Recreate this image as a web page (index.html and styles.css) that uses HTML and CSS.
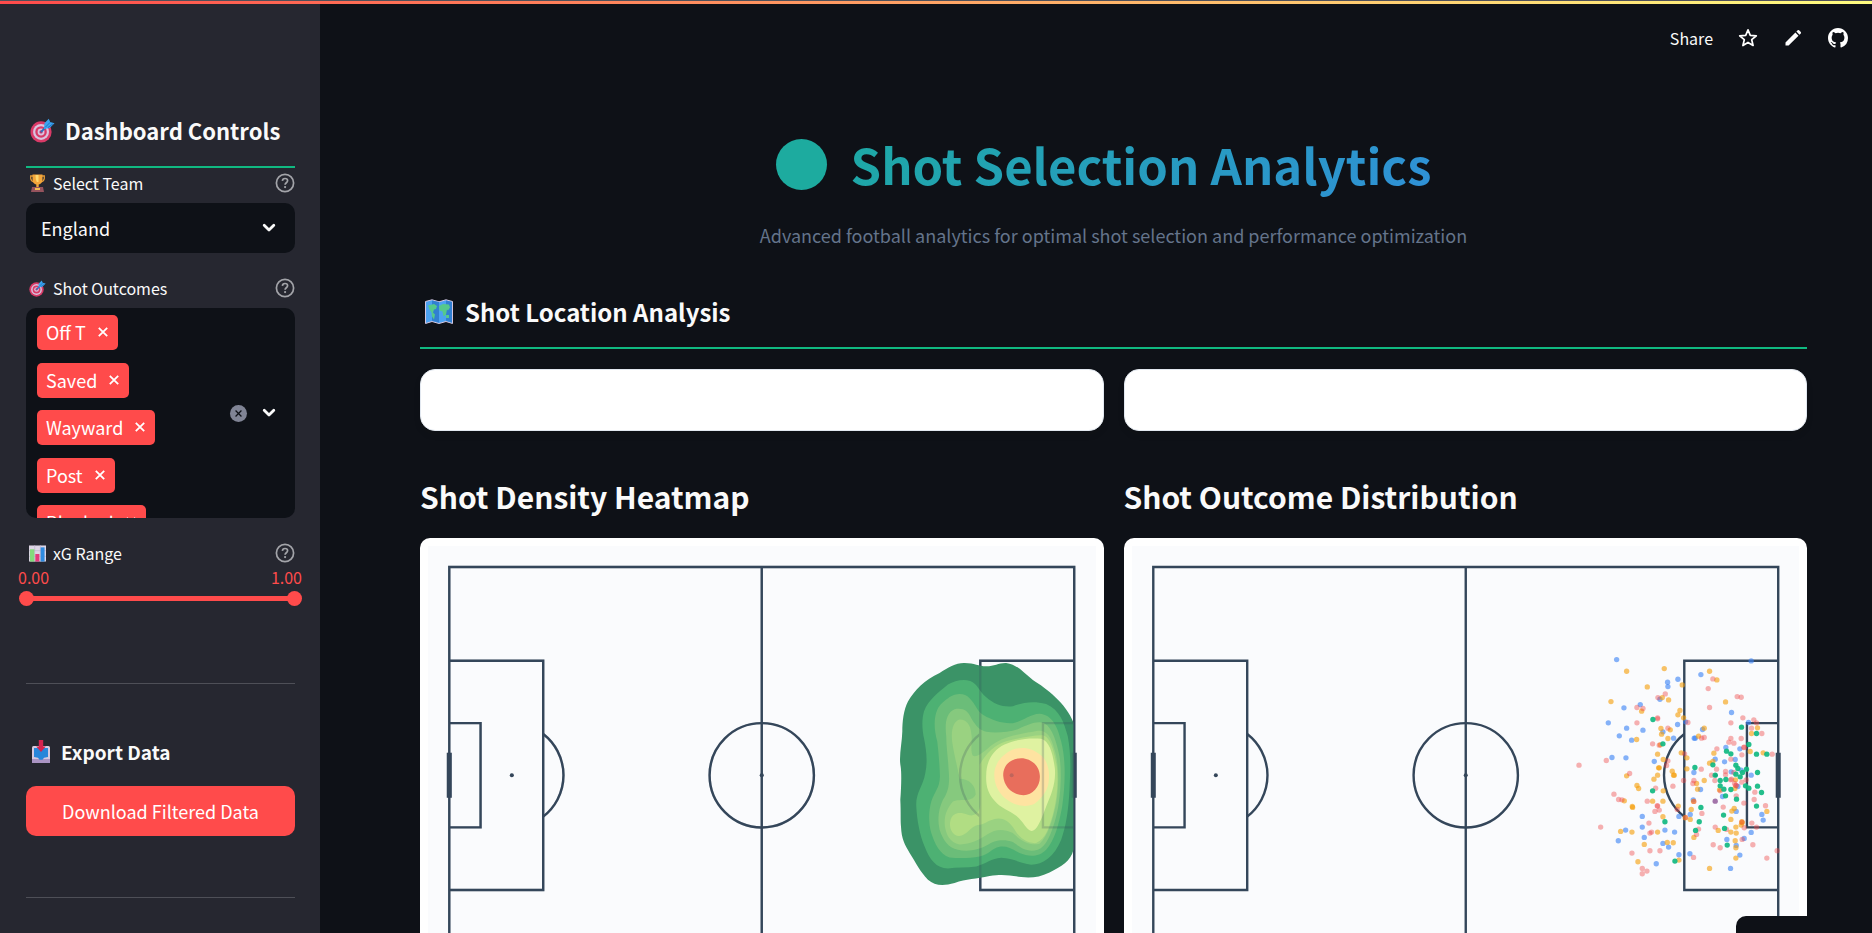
FILE: index.html
```html
<!DOCTYPE html>
<html lang="en">
<head>
<meta charset="utf-8">
<title>Shot Selection Analytics</title>
<link rel="stylesheet" href="styles.css">
</head>
<body>
<svg class="defs" aria-hidden="true">
  <defs>
    <symbol id="help" viewBox="0 0 20 20"><circle cx="10" cy="10" r="8.6" fill="none" stroke="#a3a4a9" stroke-width="1.7"/><path d="M7.4 7.9C7.5 6.4 8.6 5.5 10 5.5s2.6.9 2.6 2.3c0 1.9-2.5 2-2.5 3.9" fill="none" stroke="#a3a4a9" stroke-width="1.7"/><circle cx="10.1" cy="14.1" r="1.1" fill="#a3a4a9"/></symbol>
    <symbol id="chevron" viewBox="0 0 14 10"><path d="M2.200 2.200 7 7l4.800-4.800" fill="none" stroke="#fafafa" stroke-width="2.800" stroke-linecap="round" stroke-linejoin="round"/></symbol>
    <symbol id="cross" viewBox="0 0 10 10"><path d="M.8.8l8.400 8.400M9.200.8.8 9.200" stroke="currentColor" stroke-width="1.800"/></symbol>
    <symbol id="target" viewBox="0 0 26 26">
      <circle cx="11.500" cy="14.500" r="11" fill="#d93a67"/><circle cx="11.500" cy="14.500" r="8.300" fill="#d9c3de"/><circle cx="11.500" cy="14.500" r="6" fill="#d93a67"/><circle cx="11.500" cy="14.500" r="3.600" fill="#d9c3de"/><circle cx="11.500" cy="14.500" r="1.700" fill="#b43a70"/>
      <path d="M11.500 14.500 18 8" stroke="#2a6fbd" stroke-width="2"/><path d="M14.500 11.500 15 5.500 19.500.8l1.500 3.400 4.500 1.300-5 5z" fill="#3ba4ee"/><path d="M16 9.500 21 4.500M18.500 10 24 6" stroke="#1f6fc0" stroke-width="1"/>
    </symbol>
    <symbol id="trophy" viewBox="0 0 16 18">
      <path d="M4 2H1.200v2.500q.3 3 3.600 3.500M12 2h2.800v2.500q-.3 3-3.600 3.500" fill="none" stroke="#e39a35" stroke-width="1.300"/><path d="M3 .5h10v5.500q-.6 3.700-3.800 4.500v3H6.800v-3Q3.600 9.700 3 6z" fill="#f3a63a"/><path d="M6 1h3v7H7.300Q6 6 6 1z" fill="#ffd76c"/><path d="M2.500 13h11l1 5h-13z" fill="#95535d"/><path d="M5.500 14h5v2h-5z" fill="#f2bd55"/>
    </symbol>
    <symbol id="bars" viewBox="0 0 18 18"><path d="M0 .5h18v17H0z" fill="#ddd5e5"/><path d="M0 6h18M0 12h18M6 0v18M12 0v18" stroke="#b9aec8" stroke-width=".6"/><path d="M1 4.500h4.700v13H1z" fill="#83db7b"/><path d="M6.700 9.500h4.300v8H6.700z" fill="#e33a7b"/><path d="M12.300 2.500h4.200v15h-4.200z" fill="#2e8be0"/></symbol>
    <symbol id="inbox" viewBox="0 0 18 24"><rect y="6" width="18" height="17" rx="1.500" fill="#d5c9df"/><path d="M0 19h18v4H0z" fill="#aa94c3"/><path d="M2 8h14v9l-4 .8-1.500 2h-3L6 17.800 2 17z" fill="#2786da"/><path d="M6.800 0h4.400v6.500h2.600L9 12 4.200 6.500h2.600z" fill="#d4234f"/></symbol>
    <symbol id="map" viewBox="0 0 28 26"><path d="M.5 2.500 7 .8l7 2 7-2 6.500 1.700v22L21 22.500l-7 2-7-2-6.500 2z" fill="#4ca2f1" stroke="#d5c6df"/><path d="M7 1.500 14 3v20.500l-7-1.700zM21 1.500l6 1.500v20.500l-6-1.700z" fill="#317fd1"/><path d="M3 6.500 9 5l3 2-1 3-2 .5-1 3 2 2-1 5-2-3-.5-4-2-3zM14 7l4-2 6 .5 1 3-2 3-1-1-1 5-2.500 2-1-5-3-1zM21 16h3v3h-3z" fill="#55c98b"/></symbol>
    <g id="pitch" fill="none" stroke="#34465a" stroke-width="2.400">
      <path d="M21.300 21h625.400v417H21.300zM334 21v417M21.300 114.800h94v229.400h-94M21.300 177.300h31.300v104.300H21.300M646.700 114.800h-94v229.400h94M646.700 177.300h-31.300v104.300h31.300"/>
      <circle cx="334" cy="229.500" r="52.200"/><path d="M115.300 188.200a52.200 52.200 0 0 1 0 82.600M552.700 188.200a52.200 52.200 0 0 0 0 82.600"/>
      <path d="M21.300 207v45M646.700 207v45" stroke-width="5"/>
      <g fill="#34465a" stroke="none"><circle cx="83.900" cy="229.500" r="2"/><circle cx="334" cy="229.500" r="2"/><circle cx="584.100" cy="229.500" r="2"/></g>
    </g>
  </defs>
</svg>

<div class="topline"></div>
<div class="app">
  <aside class="sidebar">
    <h2 class="side-title"><svg class="i-target"><use href="#target"/></svg>Dashboard Controls</h2>

    <div class="field">
      <div class="label-row"><label for="team"><svg class="i-trophy"><use href="#trophy"/></svg>Select Team</label><button class="help" aria-label="Help: team"><svg><use href="#help"/></svg></button></div>
      <div class="select"><select id="team"><option>England</option></select><svg class="chevron"><use href="#chevron"/></svg></div>
    </div>

    <div class="field">
      <div class="label-row"><span id="outcomes-label"><svg class="i-small"><use href="#target"/></svg>Shot Outcomes</span><button class="help" aria-label="Help: outcomes"><svg><use href="#help"/></svg></button></div>
      <div class="multi" role="group" aria-labelledby="outcomes-label">
        <div class="tags">
          <span class="tag">Off T<button aria-label="Remove Off T"><svg><use href="#cross"/></svg></button></span>
          <span class="tag">Saved<button aria-label="Remove Saved"><svg><use href="#cross"/></svg></button></span>
          <span class="tag">Wayward<button aria-label="Remove Wayward"><svg><use href="#cross"/></svg></button></span>
          <span class="tag">Post<button aria-label="Remove Post"><svg><use href="#cross"/></svg></button></span>
          <span class="tag">Blocked<button aria-label="Remove Blocked"><svg><use href="#cross"/></svg></button></span>
        </div>
        <div class="multi-actions">
          <button class="clear" aria-label="Clear all"><svg><use href="#cross"/></svg></button>
          <button class="open" aria-label="Open"><svg class="chevron-inline"><use href="#chevron"/></svg></button>
        </div>
      </div>
    </div>

    <div class="field">
      <div class="label-row"><label for="xg-min"><svg class="i-small"><use href="#bars"/></svg>xG Range</label><button class="help" aria-label="Help: xG"><svg><use href="#help"/></svg></button></div>
      <div class="range-values"><span>0.00</span><span>1.00</span></div>
      <div class="range"><input id="xg-min" type="range" min="0" max="1" step="0.01" value="0"><input type="range" min="0" max="1" step="0.01" value="1" aria-label="xG maximum"></div>
    </div>

    <hr class="rule">
    <h3 class="export-title"><svg class="i-inbox"><use href="#inbox"/></svg>Export Data</h3>
    <button class="download">Download Filtered Data</button>
    <hr class="rule rule-low">
  </aside>

  <main class="main">
    <nav class="toolbar">
      <button>Share</button>
      <button aria-label="Star"><svg viewBox="0 0 20 20"><path d="M10 1.800l2.300 5.500 6 .5-4.600 3.900 1.400 5.800L10 14.400l-5.100 3.100 1.400-5.800-4.600-3.900 6-.5z" fill="none" stroke="#fff" stroke-width="1.700" stroke-linejoin="round"/></svg></button>
      <button aria-label="Edit"><svg viewBox="0 0 20 20"><path d="M2.500 14.500 12.400 4.600l3.100 3.100-9.900 9.900H2.500zM13.400 3.600l1.300-1.300q.7-.6 1.400 0l1.700 1.700q.6.700 0 1.400l-1.300 1.300z" fill="#fff"/></svg></button>
      <a href="#" aria-label="GitHub"><svg viewBox="0 0 16 16"><path fill="#fff" d="M8 0C3.580 0 0 3.580 0 8c0 3.540 2.290 6.530 5.470 7.590.4.070.55-.17.55-.38 0-.19-.01-.82-.01-1.490-2.010.37-2.530-.49-2.690-.94-.09-.23-.48-.94-.82-1.130-.28-.15-.68-.52-.01-.53.63-.01 1.080.58 1.230.82.720 1.210 1.870.87 2.330.66.070-.52.280-.87.510-1.070-1.780-.2-3.640-.89-3.640-3.950 0-.87.310-1.590.82-2.150-.08-.2-.36-1.020.08-2.120 0 0 .67-.21 2.200.82a7.600 7.600 0 0 1 4 0c1.530-1.040 2.200-.82 2.200-.82.440 1.100.16 1.920.08 2.120.51.560.82 1.270.82 2.150 0 3.070-1.870 3.750-3.650 3.950.29.250.54.730.54 1.480 0 1.070-.01 1.930-.01 2.200 0 .21.150.46.550.38A8 8 0 0 0 16 8c0-4.420-3.580-8-8-8z"/></svg></a>
    </nav>

    <h1 class="title"><span class="ball"></span><span class="title-text">Shot Selection Analytics</span></h1>
    <p class="subtitle">Advanced football analytics for optimal shot selection and performance optimization</p>
    <h2 class="section"><svg class="i-map"><use href="#map"/></svg>Shot Location Analysis</h2>

    <div class="columns">
      <section class="column">
        <div class="blank"></div>
        <h3 class="chart-title">Shot Density Heatmap</h3>
        <div class="chart">
          <svg viewBox="0 0 668 459" role="img" aria-label="Shot density heatmap">
            <use href="#pitch"/>
            <g transform="translate(452 94) scale(.3333)">
              <path fill="#3b9367" d="M180 99C205 83 230 68 255 69C285 69 297 79 320 79C345 79 358 68 380 69C415 74 430 98 460 120C500 145 560 190 582 248V630C574 665 545 680 510 698C480 712 455 716 425 712C390 707 370 702 330 709C290 718 260 717 225 730C190 740 165 738 145 720C120 695 110 670 90 640C75 612 66 600 64 560C62 540 64 520 62 480C65 440 66 400 63 380C57 350 67 310 68 275C68 245 72 210 85 185C105 150 135 120 180 99Z"/>
              <path fill="#4db173" d="M205 134C225 122 250 116 272 123C298 135 295 150 320 172C345 194 370 202 400 199C430 188 460 182 500 192C540 208 555 250 565 290C576 350 572 400 570 450C567 510 560 560 545 600C525 650 490 675 455 675C420 670 400 655 365 654C335 656 320 672 290 680C260 684 230 682 205 686C170 685 150 660 135 620C120 585 112 540 110 500C107 460 130 440 137 400C145 360 139 330 134 300C127 270 126 240 133 215C145 180 180 155 205 134Z"/>
              <path fill="#6bbd79" d="M210 171C230 160 255 158 270 175C290 195 290 210 310 225C340 243 370 252 400 250C430 245 450 223 480 222C520 225 535 265 545 305C560 360 557 440 548 500C537 560 525 600 500 630C475 655 445 650 420 640C395 625 380 618 360 621C335 626 330 644 300 650C270 656 235 656 210 653C180 645 165 610 155 580C145 545 148 510 155 485C165 455 180 445 181 410C180 375 177 340 173 305C163 270 162 235 173 210C180 192 195 183 210 171Z"/>
              <path fill="#86c97e" d="M225 208C250 203 265 212 275 235C290 260 300 270 320 276C350 280 385 277 415 268C445 255 470 242 495 250C520 265 532 310 540 350C548 400 543 480 530 530C515 585 500 620 475 630C440 640 420 620 400 607C370 595 340 604 325 615C300 630 265 637 235 630C205 625 190 600 180 570C172 535 178 505 190 480C207 455 211 430 207 390C205 350 200 320 200 290C195 250 200 218 225 208Z"/>
              <path fill="#9ad281" d="M240 239C260 238 273 255 275 280C280 300 270 330 280 348C300 355 325 320 350 307C390 285 440 280 475 273C500 270 515 290 525 330C540 375 538 440 530 490C520 540 505 590 480 612C450 620 420 600 400 580C370 565 345 570 325 583C300 600 270 615 240 614C210 608 200 585 196 560C192 530 202 505 220 485C245 475 275 490 288 465C290 440 270 417 240 417C232 375 225 350 220 320C212 280 218 245 240 239Z"/>
              <path fill="#b1dd83" d="M300 375C320 340 345 315 380 304C420 295 460 285 490 286C515 292 525 340 532 380C537 430 532 480 520 525C508 565 500 595 470 610C440 612 415 590 402 565C385 540 365 533 345 538C320 545 315 555 295 556C275 558 260 590 238 589C215 587 207 560 213 540C220 518 240 515 265 525C285 532 302 520 302 490Z"/>
              <path fill="#dff2a1" d="M320 405C320 365 340 330 375 314C410 298 450 294 485 297C512 305 520 345 526 385C530 430 515 465 500 500C488 530 475 572 456 574C440 571 432 545 410 528C390 512 365 507 345 483C325 462 318 435 320 405Z"/>
              <path fill="#fee3a1" d="M344 405C344 370 370 342 400 329C430 319 460 325 482 345C503 360 511 390 508 420C507 450 488 475 465 492C440 504 410 498 386 482C360 465 345 440 344 405Z"/>
              <path fill="#e86e5c" d="M371 408C370 378 392 355 425 355C455 355 480 378 481 408C483 440 460 466 432 466C400 466 373 442 371 408Z"/>
            </g>
            <use href="#pitch" opacity=".22"/>
          </svg>
        </div>
      </section>
      <section class="column">
        <div class="blank"></div>
        <h3 class="chart-title">Shot Outcome Distribution</h3>
        <div class="chart">
          <svg viewBox="0 0 668 459" role="img" aria-label="Shot outcome distribution">
            <use href="#pitch"/>
            <g id="shots" transform="translate(428 94) scale(.3333)"></g>
          </svg>
        </div>
      </section>
    </div>
    <div class="manage"></div>
  </main>
</div>
<script src="shots.js"></script>
</body>
</html>
```
FILE: styles.css
```css
* { box-sizing: border-box; }
body {
  margin: 0;
  background: #0e1117;
  color: #fafafa;
  font-family: "Noto Sans CJK SC", "Noto Sans", sans-serif;
  font-size: 18px;
  line-height: 30px;
}
h1, h2, h3, p { margin: 0; }
button, select { font: inherit; color: inherit; border: 0; background: none; padding: 0; }
svg { display: block; flex: none; }
.defs { position: absolute; width: 0; height: 0; }
.topline {
  position: absolute;
  top: 0;
  left: 0;
  right: 0;
  z-index: 2;
  height: 4px;
  border-top: 1px solid #50515a;
  background: linear-gradient(90deg, #ff4b4b, #fffd80);
}
.app { display: flex; height: 100vh; overflow: hidden; }

.sidebar { flex: none; width: 320px; padding: 110px 25px 0 26px; background: #262730; }
.side-title {
  display: flex;
  align-items: center;
  gap: 10px;
  padding: 0 0 16px 4px;
  border-bottom: 2px solid #10b981;
  font-size: 22px;
  font-weight: 600;
  line-height: 40px;
  white-space: nowrap;
}
.field { margin-bottom: 20px; }
.label-row { display: flex; align-items: center; justify-content: space-between; margin-bottom: 5px; font-size: 16px; }
.label-row label, .label-row span { display: flex; align-items: center; gap: 7px; padding-left: 3px; }
.help svg { width: 20px; height: 20px; }
.i-target { width: 25px; height: 25px; }
.i-small { width: 17px; height: 17px; }
.i-trophy { width: 17px; height: 18px; }
.i-inbox { width: 18px; height: 24px; }
.i-map { width: 28px; height: 26px; }

.select { position: relative; }
.select select { display: block; width: 100%; height: 50px; padding: 0 15px 1px; border-radius: 10px; background: #0e1117; appearance: none; }
.chevron { position: absolute; right: 19px; top: 20px; width: 14px; height: 10px; pointer-events: none; }
.chevron-inline { width: 14px; height: 10px; }
.multi { display: flex; justify-content: space-between; height: 210px; padding: 7px 19px 0 11px; border-radius: 10px; background: #0e1117; overflow: hidden; }
.tags { display: flex; flex-direction: column; justify-content: space-between; align-items: flex-start; height: 225px; }
.tag { display: flex; align-items: center; gap: 12px; height: 35px; padding: 0 10px 1px 9px; border-radius: 5px; background: #ff4b4b; color: #fff; }
.tag svg { width: 10px; height: 10px; }
.multi-actions { display: flex; align-items: center; gap: 15px; padding-bottom: 7px; }
.clear { display: grid; place-items: center; width: 17px; height: 17px; border-radius: 50%; background: #808495; color: #0e1117; }
.clear svg { width: 7px; height: 7px; }

.range-values { display: flex; justify-content: space-between; margin: -5px -7px 0 -8px; color: #ff4b4b; font-size: 16px; line-height: 18px; }
.range { position: relative; height: 24px; margin: 0 -7px; background: linear-gradient(#ff4b4b, #ff4b4b) center / calc(100% - 14px) 5px no-repeat; }
.range input { position: absolute; left: 0; top: 0; width: 100%; height: 24px; margin: 0; appearance: none; background: none; pointer-events: none; }
.range input::-webkit-slider-thumb { appearance: none; width: 15px; height: 15px; border-radius: 50%; background: #ff4b4b; pointer-events: auto; }
.range input::-moz-range-thumb { width: 15px; height: 15px; border: 0; border-radius: 50%; background: #ff4b4b; }

.rule { height: 1px; margin: 73px 0 53px; border: 0; background: #4e4f57; }
.rule-low { margin-top: 61px; }
.export-title { display: flex; align-items: center; gap: 11px; margin-bottom: 19px; padding-left: 6px; font-size: 19px; font-weight: 600; }
.download { width: 100%; height: 50px; padding-bottom: 1px; border-radius: 10px; background: #ff4b4b; color: #fff; }

.main { position: relative; flex: 1; padding: 120px 65px 0 100px; }
.toolbar { position: absolute; top: 23px; right: 24px; display: flex; align-items: center; gap: 25px; font-size: 16px; line-height: 30px; }
.toolbar svg { width: 20px; height: 20px; }
.title {
  display: flex;
  align-items: center;
  justify-content: center;
  gap: 24px;
  margin-bottom: 12px;
  padding-right: 20px;
  font-size: 49px;
  font-weight: 700;
  line-height: 88px;
  background: linear-gradient(135deg, #10b981, #3b82f6);
  -webkit-background-clip: text;
  background-clip: text;
  color: transparent;
}
.ball { width: 51px; height: 51px; border-radius: 50%; background: #1dab9f; }
.subtitle { margin-bottom: 42px; color: #64748b; font-size: 18px; text-align: center; }
.section { display: flex; align-items: center; gap: 12px; padding: 0 0 15px 5px; border-bottom: 2px solid #10b981; font-size: 24px; font-weight: 600; line-height: 40px; }
.columns { display: grid; grid-template-columns: 1fr 1fr; gap: 20px; margin-top: 20px; }
.blank { height: 62px; border: 1px solid #e2e8f0; border-radius: 15px; background: #fff; box-shadow: 0 4px 6px rgba(20, 20, 10, .1); }
.chart-title { margin: 45px 0 22px; font-size: 30px; font-weight: 600; line-height: 40px; }
.chart { padding: 8px; border-radius: 10px; background: #fff; }
.chart svg { width: 100%; background: #fafbfd; }
.manage { position: absolute; right: 0; bottom: 0; width: 136px; height: 17px; border-top-left-radius: 10px; background: #0e1117; }
```
FILE: shots.js
```js
// Shot positions by outcome, as x,y pairs in plot units.
const series = [
  { color: '#3b82f6', opacity: .62, points: '171,59 355,118 324,127 325,140 424,104 575,63 301,178 242,194 193,204 146,249 201,265 250,271 179,288 216,301 354,254 378,246 310,276 342,295 157,353 199,354 284,365 516,218 567,248 429,269 404,295 499,323 541,327 467,358 495,366 527,359 403,398 515,396 545,391 575,406 423,449 401,480 392,524 358,530 248,530 248,562 198,571 176,603 254,593 316,571 345,577 310,611 327,622 358,645 290,672 391,642 513,686 541,646 530,617 554,596 575,578 502,599 530,515 489,470 535,440 607,524 611,541 407,295' },
  { color: '#f59e0b', opacity: .62, points: '201,94 314,86 263,141 368,135 154,185 246,214 308,173 327,180 361,212 355,225 372,234 304,266 332,270 306,283 231,299 325,296 302,315 294,343 311,359 365,339 382,354 382,387 297,384 283,418 338,394 342,406 294,406 201,408 232,437 237,446 311,453 194,483 218,500 219,503 279,484 310,484 356,499 395,509 392,539 310,531 377,534 183,575 217,577 294,577 254,614 323,608 341,609 235,666 358,661 403,593 450,94 472,120 498,186 434,265 417,289 463,340 450,370 460,365 434,422 411,431 414,448 402,485 344,406 299,384 572,335 594,264 576,281 611,339 528,420 526,446 480,450 524,506 517,514 514,539 529,562 530,580 548,549 545,556 476,572 514,577 527,603 529,624 529,655 450,686 622,515 547,546' },
  { color: '#ef4444', opacity: .42, points: '317,162 295,173 232,203 250,206 294,234 294,237 232,249 385,248 325,265 279,312 299,316 325,363 321,377 375,342 140,362 58,376 210,401 340,439 288,445 163,463 177,479 187,480 263,484 294,499 293,498 286,515 299,511 353,509 268,550 276,577 271,580 123,562 217,640 271,633 301,633 248,686 262,694 248,702 372,422 403,422 400,431 425,388 403,485 427,521 417,568 411,584 402,653 378,533 446,146 460,117 533,170 545,172 450,203 550,234 583,240 591,249 514,249 576,265 607,281 545,296 514,296 508,307 523,310 554,322 547,345 514,358 472,327 434,293 426,295 471,388 498,395 498,405 456,406 466,422 523,398 516,418 525,431 530,437 547,427 560,420 482,453 530,468 586,457 584,479 553,490 491,502 618,498 577,550 591,562 554,564 548,599 580,615 653,633 622,655 461,615 482,624 467,562 501,569 547,547 638,343 513,420 529,437 553,323' },
  { color: '#10b981', opacity: .92, points: '280,239 310,312 279,453 316,546 346,664 406,383 424,503 419,546 408,572 546,262 591,281 568,314 591,343 622,343 501,334 514,342 529,376 535,386 561,388 549,398 529,403 542,411 594,398 460,375 467,406 482,422 499,419 482,438 493,448 514,449 498,468 531,478 558,438 568,445 594,439 606,458 591,499 492,526 495,566 503,616' },
  { color: '#7c3a86', opacity: .7, points: '467,484' }
];
const layer = document.getElementById('shots');
for (const { color, opacity, points } of series) {
  for (const pair of points.split(' ')) {
    const [x, y] = pair.split(',');
    const dot = document.createElementNS('http://www.w3.org/2000/svg', 'circle');
    dot.setAttribute('cx', x);
    dot.setAttribute('cy', y);
    dot.setAttribute('r', 8);
    dot.setAttribute('fill', color);
    dot.setAttribute('fill-opacity', opacity);
    layer.append(dot);
  }
}
```
